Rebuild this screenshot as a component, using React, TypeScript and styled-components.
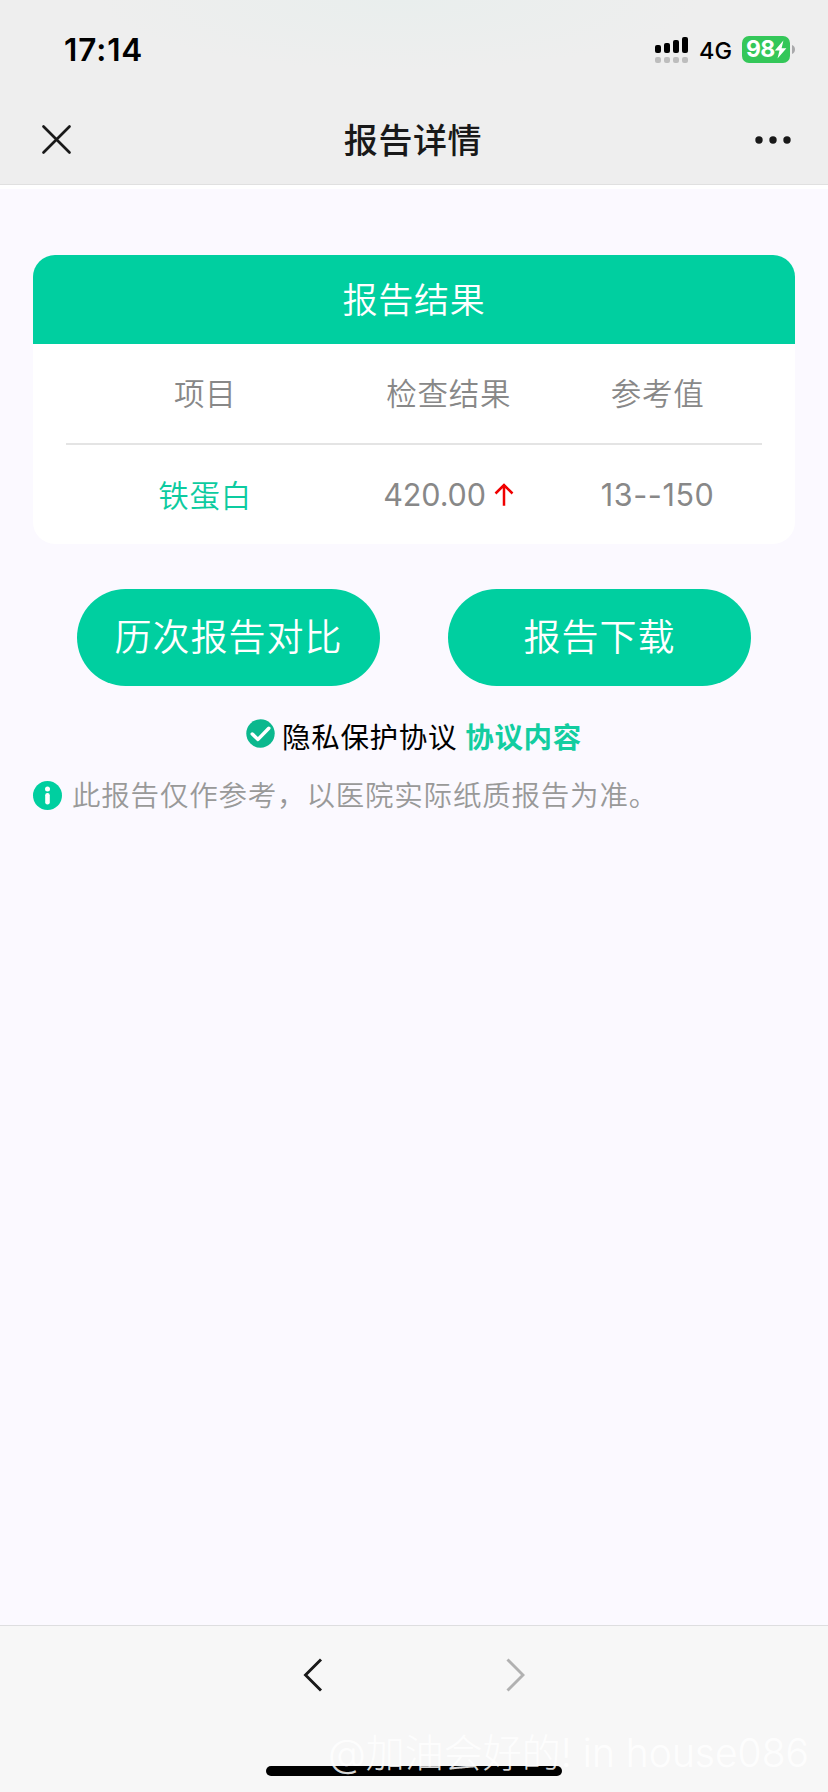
import React from 'react';
import styled, { createGlobalStyle } from 'styled-components';

const GREEN = '#00cfa0';
const SANS = `Inter, 'Noto Sans CJK SC', sans-serif`;
const CJK = `'Noto Sans CJK SC', sans-serif`;

const GlobalStyle = createGlobalStyle`
  *, *::before, *::after { box-sizing: border-box; }
  body { margin: 0; background: #fbf9ff; }
  button { border: 0; padding: 0; background: none; font: inherit; color: inherit; }
  svg { display: block; flex: none; }
`;

const Screen = styled.div`
  position: relative;
  display: flex;
  flex-direction: column;
  width: 828px;
  height: 1792px;
  overflow: hidden;
  background: #fbf9ff;
  font-family: ${SANS};
`;

const TopBar = styled.header`
  height: 185px;
  flex: none;
  border-bottom: 1px solid #e0e0e0;
  background:
    radial-gradient(ellipse 300px 70px at 400px 0, #e9eeed 0%, #e9eeed00 100%),
    #eeeeee;
`;

const StatusBar = styled.div`
  display: flex;
  align-items: center;
  justify-content: space-between;
  height: 99px;
  padding: 0 33px 0 64px;
`;

const Clock = styled.time`
  font-size: 31.5px;
  font-weight: 600;
  line-height: 40px;
  letter-spacing: 0.9px;
  color: #000;
`;

const StatusIcons = styled.div`
  display: flex;
  align-items: center;
`;

const Network = styled.span`
  margin: 2px 10px 0 10px;
  font-size: 23.5px;
  font-weight: 450;
  line-height: 28px;
  color: #000;
`;

const Battery = styled.div`
  display: flex;
  align-items: center;
  gap: 2px;
`;

const BatteryBody = styled.div`
  display: flex;
  align-items: center;
  width: 48px;
  height: 27px;
  padding-left: 4px;
  border-radius: 7px;
  background: #34c759;
  color: #fff;
  font-size: 23px;
  font-weight: 700;
  letter-spacing: -0.8px;
  line-height: 27px;
`;

const NavBar = styled.div`
  display: grid;
  grid-template-columns: 100px 1fr 100px;
  align-items: center;
  height: 81px;
`;

const NavButton = styled.button<{ $end?: boolean }>`
  display: flex;
  justify-content: ${p => (p.$end ? 'flex-end' : 'flex-start')};
  padding: ${p => (p.$end ? '1px 36px 0 0' : '0 0 0 41px')};
`;

const Title = styled.h1`
  margin: 0;
  padding: 0 2px 2px 0;
  text-align: center;
  font-family: ${CJK};
  font-size: 34px;
  font-weight: 500;
  letter-spacing: 0.6px;
  line-height: 40px;
  color: #191919;
`;

const Content = styled.main`
  flex: 1;
  padding: 66px 33px 0;
  border-top: 4px solid #fff;
`;

const Card = styled.section`
  height: 289px;
  border-radius: 22px;
  overflow: hidden;
  background: #fff;
`;

const CardTitle = styled.h2`
  margin: 0;
  height: 89px;
  background: ${GREEN};
  color: #fff;
  text-align: center;
  font-family: ${CJK};
  font-size: 35px;
  font-weight: 350;
  letter-spacing: 0.8px;
  line-height: 86px;
`;

const Table = styled.div`
  padding: 0 33px;
`;

const Row = styled.div<{ $divided?: boolean }>`
  display: grid;
  grid-template-columns: 40% 30% 30%;
  align-items: center;
  height: ${p => (p.$divided ? 101 : 99)}px;
  border-bottom: ${p => (p.$divided ? '2px solid #e4e4e4' : '0')};
`;

const Cell = styled.div<{ $link?: boolean; $numeric?: boolean }>`
  display: flex;
  align-items: center;
  justify-content: center;
  padding-bottom: ${p => (p.$numeric ? 0 : p.$link ? 2 : 3)}px;
  font-size: 30.5px;
  font-weight: 350;
  letter-spacing: 0.8px;
  color: ${p => (p.$link ? '#0dcba0' : '#888')};
`;

const Figure = styled.span<{ $spacing?: number }>`
  font-size: 30.5px;
  font-weight: 380;
  letter-spacing: ${p => p.$spacing ?? -0.1}px;
`;

const Actions = styled.div`
  display: flex;
  justify-content: space-between;
  padding: 45px 44px 0;
`;

const PillButton = styled.button`
  width: 303px;
  height: 97px;
  padding-bottom: 6px;
  border-radius: 49px;
  background: ${GREEN};
  color: #fff;
  font-family: ${CJK};
  font-size: 37px;
  font-weight: 350;
  letter-spacing: 1px;
`;

const Agreement = styled.div`
  display: flex;
  align-items: flex-start;
  justify-content: center;
  margin-top: 33px;
  height: 40px;
  font-family: ${CJK};
  font-size: 28.5px;
  letter-spacing: 0.7px;
  line-height: 34px;
  color: #000;
`;

const AgreementText = styled.span`
  margin: 0 8px 0 7px;
`;

const AgreementLink = styled.a`
  font-weight: 600;
  color: #12cda0;
`;

const Notice = styled.p`
  display: flex;
  align-items: center;
  gap: 10px;
  margin: 18px 0 0;
  font-family: ${CJK};
  font-size: 28.5px;
  font-weight: 350;
  letter-spacing: 0.8px;
  line-height: 40px;
  color: #999;
`;

const NoticeText = styled.span`
  margin-top: -3px;
`;

const BottomBar = styled.footer`
  position: relative;
  display: flex;
  flex-direction: column;
  align-items: center;
  justify-content: space-between;
  height: 167px;
  flex: none;
  padding: 32px 0 16px;
  border-top: 1px solid #dedee0;
  background: #f7f7f7;
`;

const History = styled.div`
  display: flex;
  gap: 182px;
`;

const HomeIndicator = styled.div`
  width: 296px;
  height: 10px;
  border-radius: 5px;
  background: #000;
`;

const Watermark = styled.span`
  position: absolute;
  right: 19px;
  bottom: 12px;
  white-space: nowrap;
  font-size: 39px;
  font-weight: 300;
  line-height: 54px;
  color: rgba(255, 255, 255, 0.85);
`;

const SignalIcon = () => (
  <svg width="34" height="28" viewBox="0 0 34 28">
    {[8, 10, 13, 16].map((h, i) => (
      <React.Fragment key={h}>
        <rect x={i * 9} y={17 - h} width="6" height={h} rx="2" fill="#000" />
        <rect x={i * 9} y="21" width="6" height="6" rx="2" fill="#bdbdbd" />
      </React.Fragment>
    ))}
  </svg>
);

const BoltIcon = () => (
  <svg width="13" height="19" viewBox="0 0 13 19">
    <path d="M9.4 0.6 0.8 10.6h4.7L3.5 18.4 12.4 8.2H7.6z" fill="#fff" />
  </svg>
);

const BatteryTip = () => (
  <svg width="3" height="9" viewBox="0 0 3 9">
    <path d="M0 0c2 .8 3 2.5 3 4.500S2 8.200 0 9z" fill="#a9a9ab" />
  </svg>
);

const CloseIcon = () => (
  <svg width="31" height="31" viewBox="0 0 31 31">
    <path d="M2.500 2.500 28.500 28.500M28.500 2.500 2.500 28.500" stroke="#191919" strokeWidth="2.700" strokeLinecap="round" />
  </svg>
);

const MoreIcon = () => (
  <svg width="38" height="10" viewBox="0 0 38 10">
    {[5, 19, 33].map(x => (
      <circle key={x} cx={x} cy="5" r="3.700" fill="#191919" />
    ))}
  </svg>
);

const Chevron = ({ forward = false }: { forward?: boolean }) => (
  <svg width="20" height="35" viewBox="0 0 20 35">
    <path
      d={forward ? 'M2.500 1.500 18 17 2.500 32.500' : 'M18 1.500 2.500 17 18 32.500'}
      fill="none"
      stroke={forward ? '#b1b1b1' : '#191919'}
      strokeWidth="2.900"
    />
  </svg>
);

const UpArrow = () => (
  <svg width="20" height="24" viewBox="0 0 20 24">
    <path d="M10 22.800V2.500M1.500 10.500 10 2l8.500 8.500" fill="none" stroke="#f00000" strokeWidth="2.500" />
  </svg>
);

const CheckIcon = () => (
  <svg width="29" height="29" viewBox="0 0 29 29">
    <circle cx="14.500" cy="14.500" r="14.200" fill="#0bb88e" />
    <path d="m6.300 15 5.700 5.400L22.800 9.300" fill="none" stroke="#fff" strokeWidth="3.500" strokeLinecap="round" strokeLinejoin="round" />
  </svg>
);

const InfoIcon = () => (
  <svg width="29" height="29" viewBox="0 0 29 29">
    <circle cx="14.500" cy="14.500" r="14.500" fill={GREEN} />
    <circle cx="14.500" cy="8" r="2.500" fill="#fff" />
    <rect x="12.200" y="12" width="4.600" height="11.500" rx="2.200" fill="#fff" />
  </svg>
);

export default function App() {
  return (
    <Screen>
      <GlobalStyle />
      <TopBar>
        <StatusBar>
          <Clock>17:14</Clock>
          <StatusIcons>
            <SignalIcon />
            <Network>4G</Network>
            <Battery>
              <BatteryBody>
                98
                <BoltIcon />
              </BatteryBody>
              <BatteryTip />
            </Battery>
          </StatusIcons>
        </StatusBar>
        <NavBar>
          <NavButton aria-label="关闭">
            <CloseIcon />
          </NavButton>
          <Title>报告详情</Title>
          <NavButton $end aria-label="更多">
            <MoreIcon />
          </NavButton>
        </NavBar>
      </TopBar>
      <Content>
        <Card>
          <CardTitle>报告结果</CardTitle>
          <Table>
            <Row $divided>
              <Cell>项目</Cell>
              <Cell>检查结果</Cell>
              <Cell>参考值</Cell>
            </Row>
            <Row>
              <Cell $link>铁蛋白</Cell>
              <Cell $numeric>
                <Figure>420.00&nbsp;</Figure>
                <UpArrow />
              </Cell>
              <Cell $numeric>
                <Figure $spacing={0.6}>13--150</Figure>
              </Cell>
            </Row>
          </Table>
        </Card>
        <Actions>
          <PillButton>历次报告对比</PillButton>
          <PillButton>报告下载</PillButton>
        </Actions>
        <Agreement>
          <CheckIcon />
          <AgreementText>隐私保护协议</AgreementText>
          <AgreementLink>协议内容</AgreementLink>
        </Agreement>
        <Notice>
          <InfoIcon />
          <NoticeText>此报告仅作参考，以医院实际纸质报告为准。</NoticeText>
        </Notice>
      </Content>
      <BottomBar>
        <History>
          <Chevron />
          <Chevron forward />
        </History>
        <HomeIndicator />
        <Watermark>@加油会好的! in house086</Watermark>
      </BottomBar>
    </Screen>
  );
}
